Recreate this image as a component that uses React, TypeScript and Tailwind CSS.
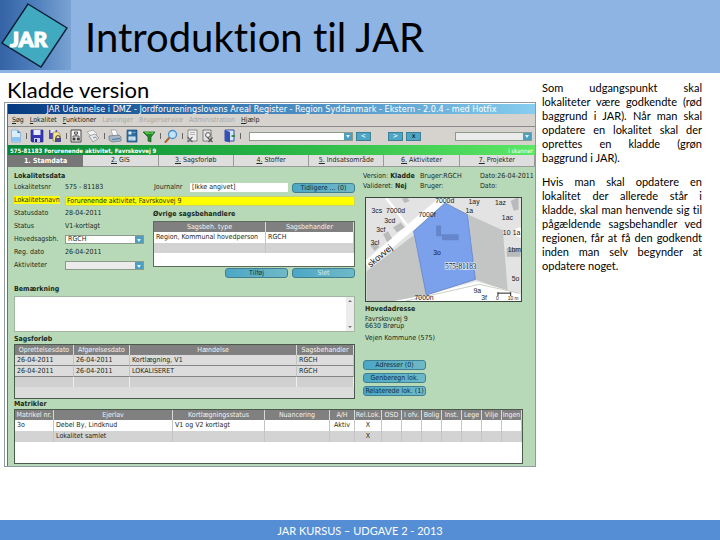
import React from 'react';

const tabs = ['1. Stamdata', '2. GIS', '3. Sagsforløb', '4. Stoffer', '5. Indsatsområde', '6. Aktiviteter', '7. Projekter'];

const menuItems = [
  { label: 'Søg', enabled: true },
  { label: 'Lokalitet', enabled: true },
  { label: 'Funktioner', enabled: true },
  { label: 'Løsninger', enabled: false },
  { label: 'Brugerservice', enabled: false },
  { label: 'Administration', enabled: false },
  { label: 'Hjælp', enabled: true },
];

const caseRows = [
  ['26-04-2011', '26-04-2011', 'Kortlægning, V1', 'RGCH'],
  ['26-04-2011', '26-04-2011', 'LOKALISERET', 'RGCH'],
];

const parcelHeads = ['Matrikel nr.', 'Ejerlav', 'Kortlægningsstatus', 'Nuancering', 'A/H', 'Rel.Lok.', 'OSD', 'I ofv.', 'Bolig', 'Inst.', 'Lege', 'Vilje', 'Ingen'];
const parcelRows = [
  ['3o', 'Debel By, Lindknud', 'V1 og V2 kortlagt', '', 'Aktiv', 'X', '', '', '', '', '', '', ''],
  ['', 'Lokalitet samlet', '', '', '', 'X', '', '', '', '', '', '', ''],
];

const Logo: React.FC = () => (
  <svg viewBox="0 0 71 70" className="h-[70px] w-[71px] shrink-0" role="img" aria-label="JAR">
    <defs>
      <linearGradient id="logoSky" x1="0" y1="0" x2="1" y2="0">
        <stop offset="0" stopColor="#3563a6" />
        <stop offset="0.5" stopColor="#4f80bd" />
        <stop offset="1" stopColor="#7aa3d3" />
      </linearGradient>
    </defs>
    <rect width="71" height="70" fill="url(#logoSky)" />
    <path d="M28 4 67 28 41 67 2 43Z" fill="#41aac0" stroke="#0d1c35" strokeWidth="1.4" />
    <text x="10" y="47" fontFamily="Lato" fontWeight="900" fontSize="21" fill="#fff" stroke="#fff" strokeWidth="1.2">JAR</text>
  </svg>
);

const Page = () => (
  <svg viewBox="0 0 12 14" className="h-[14px] w-3">
    <path d="M1.500 1h6l3 3v9h-9z" fill="#d9edfb" stroke="#7fb2dc" strokeWidth="0.8" />
    <path d="M7.500 1v3h3z" fill="#3b7fc0" />
    <path d="M2 8h8v4.600H2z" fill="#8cc4ef" />
  </svg>
);

const Disk = () => (
  <svg viewBox="0 0 14 14" className="h-[14px] w-[14px]">
    <path d="M1 1h12v12H2l-1-1z" fill="#3535b5" stroke="#24247c" strokeWidth="0.6" />
    <path d="M3.500 1h7v5h-7z" fill="#e8ecfa" />
    <path d="M4 9h6v4H4z" fill="#c9cdeb" />
    <path d="M5 10h2v3H5z" fill="#24247c" />
  </svg>
);

const DiskLock = () => (
  <svg viewBox="0 0 14 14" className="h-[14px] w-[14px]">
    <path d="M1 1h8v9H1z" fill="#4a4ac0" />
    <path d="M2.500 1h5v3h-5z" fill="#eef" />
    <path d="M5 3h5l2 2v7H5z" fill="#f5e48a" stroke="#8c7b2d" strokeWidth="0.6" />
    <path d="M7 9h6v4H7z" fill="#4c4c8d" />
    <path d="M8 9V7.500q2-2 4 0V9" fill="none" stroke="#444" />
  </svg>
);

const Preview = () => (
  <svg viewBox="0 0 12 14" className="h-[14px] w-3">
    <path d="M1 1h10v12H1z" fill="#f4f4f4" stroke="#333" strokeWidth="0.9" />
    <path d="M4.500 3h3v2h-3zM6 5v2M3 8V7h6v1" fill="none" stroke="#333" strokeWidth="0.8" />
    <path d="M2.500 8.500h3v3h-3zM6.800 8.500h3v3h-3z" fill="#444" />
  </svg>
);

const Copies = () => (
  <svg viewBox="0 0 14 14" className="h-[14px] w-[14px]">
    <path d="M1 3 7 1l4 4-5 3z" fill="#f3f3f3" stroke="#999" strokeWidth="0.7" />
    <path d="M3 7 9 5l4 4-6 4z" fill="#e5e8ea" stroke="#888" strokeWidth="0.7" />
    <path d="M7 9q2-2 4 0" fill="none" stroke="#777" strokeWidth="0.8" />
  </svg>
);

const Printer = () => (
  <svg viewBox="0 0 14 14" className="h-[14px] w-[14px]">
    <path d="M3 1h5l2 6H5z" fill="#fff" stroke="#999" strokeWidth="0.7" />
    <path d="M1 7 11 6l2 2v4l-9 1-3-2z" fill="#a9b6c2" stroke="#667482" strokeWidth="0.7" />
    <path d="M4 10.500 12 9.500" stroke="#3d78b6" strokeWidth="1.2" />
  </svg>
);

const Report = () => (
  <svg viewBox="0 0 12 14" className="h-[14px] w-3">
    <path d="M1 1h10v12H1z" fill="#2f6d9f" stroke="#1f4c78" strokeWidth="0.7" />
    <path d="M2.500 2.500h3v3h-3zM2.500 7.500h7v4h-7z" fill="#dcecf6" />
    <path d="M6.500 3.500h3M3.500 9h5M3.500 10.500h4" stroke="#8fb9d6" strokeWidth="0.7" />
  </svg>
);

const Funnel = () => (
  <svg viewBox="0 0 14 14" className="h-[14px] w-[14px]">
    <path d="M1 3h12L9 8v5l-3-1V8z" fill="#23872f" stroke="#155d1e" strokeWidth="0.7" />
    <path d="M2 2q2 1.500 4 0l2 2 4-2-1 3H4z" fill="#57bd48" />
  </svg>
);

const Magnifier = () => (
  <svg viewBox="0 0 14 14" className="h-[14px] w-[14px]">
    <path d="M5.500 8.500 1.500 13" stroke="#b0622f" strokeWidth="2" strokeLinecap="round" />
    <circle cx="8.500" cy="5.500" r="4" fill="#c5e3f8" stroke="#4a8fc7" strokeWidth="1.300" />
  </svg>
);

const CrossPage = () => (
  <svg viewBox="0 0 12 14" className="h-[14px] w-3">
    <path d="M2 1h9v11H2z" fill="#eee" stroke="#777" strokeWidth="0.8" />
    <path d="M4 3.500h5M4 5.500h5" stroke="#999" strokeWidth="0.700" />
    <path d="m1.500 8 5 5m0-5-5 5" stroke="#666" strokeWidth="1.200" />
  </svg>
);

const FindPage = () => (
  <svg viewBox="0 0 12 14" className="h-[14px] w-3">
    <path d="M1 1h8v11H1z" fill="#e5e5e5" stroke="#666" strokeWidth="0.8" />
    <circle cx="6" cy="6" r="2.400" fill="#f6f6f6" stroke="#555" />
    <path d="m5.500 8.500 5 4.500m0-4.500-4 4.500" stroke="#555" strokeWidth="1.200" />
  </svg>
);

const Door = () => (
  <svg viewBox="0 0 12 14" className="ml-[6px] h-[14px] w-3">
    <path d="M1 1h9v11H1z" fill="#d7e6fa" stroke="#2c3c9a" strokeWidth="0.9" />
    <path d="m1 1 5 2v10.500L1 12z" fill="#3450bb" />
    <path d="M7.500 7h3.500" stroke="#258a46" strokeWidth="1.800" />
  </svg>
);

const toolGroups = [
  [{ name: 'Ny', Icon: Page }],
  [{ name: 'Gem', Icon: Disk }, { name: 'Gem og lås', Icon: DiskLock }],
  [{ name: 'Vis', Icon: Preview }, { name: 'Kopier', Icon: Copies }],
  [{ name: 'Udskriv', Icon: Printer }, { name: 'Rapport', Icon: Report }, { name: 'Filter', Icon: Funnel }],
  [{ name: 'Søg', Icon: Magnifier }],
  [{ name: 'Slet', Icon: CrossPage }, { name: 'Find', Icon: FindPage }, { name: 'Luk', Icon: Door }],
];

const PanelButton: React.FC<{ children: React.ReactNode; dim?: boolean }> = ({ children, dim }) => (
  <button
    className={
      dim
        ? 'h-[10px] w-[63px] rounded-[3px] border border-[#3f7f92] bg-gradient-to-r from-[#4ba7c6] to-[#70b9c6] text-center leading-[8px] text-[#d5edf2]'
        : 'h-[10px] w-[63px] rounded-[3px] border border-[#3f7f92] bg-gradient-to-r from-[#4ba7c6] to-[#70b9c6] text-center leading-[8px] text-[#10303c]'
    }
  >
    {children}
  </button>
);

const Combo: React.FC<{ label: string; value?: string; className: string }> = ({ label, value = '', className }) => (
  <div className={`relative flex h-[9px] border border-[#8b9a8b] ${className}`}>
    <select aria-label={label} className="w-full appearance-none bg-transparent pl-[2px] leading-[7px] outline-none">
      <option>{value}</option>
    </select>
    <span className="pointer-events-none absolute inset-y-0 right-0 flex w-2 items-center justify-center bg-[#4c9fc0]">
      <svg viewBox="0 0 4 4" className="h-1 w-1">
        <path d="M0 1h4L2 4z" fill="#e4f5fb" />
      </svg>
    </span>
  </div>
);

const Row: React.FC<{ label: string; children?: React.ReactNode }> = ({ label, children }) => (
  <div className="flex h-[13px] items-center">
    <span className="w-[51px] shrink-0">{label}</span>
    {children}
  </div>
);

const Heading: React.FC<{ children: React.ReactNode }> = ({ children }) => (
  <h3 className="h-[10px] font-bold leading-[10px]">{children}</h3>
);

const th = 'overflow-hidden border-r border-[#d8d8d8] bg-[#808080] p-0 text-center font-normal text-[#f2f2f2]';
const td = 'overflow-hidden border-r border-[#c4c4c4] px-[2px] py-0';

const Map: React.FC = () => (
  <svg viewBox="0 0 157 105" className="h-[105px] w-[157px] border border-[#3c463c] bg-[#e3e3e3]" fontFamily="Liberation Sans" fontSize="7" fill="#222">
    <path d="M0 75 48 38 61 99 30 105H0zM104 17l35 16 5 62-33-12z" fill="#c3c4c4" />
    <path d="M20 0 44 31" stroke="#fff" strokeWidth="2.500" />
    <path d="M0 68 80 0" stroke="#fff" strokeWidth="8" />
    <path d="M28 105 61 99l51-14 45 13v7z" fill="#fff" />
    <path d="M40 105 115 88l40 9" fill="none" stroke="#c9cfc5" strokeWidth="1" />
    <path d="m17 37 5-3 4 7-5 4zM27 30l8-5 4 5-8 5zM4 48l5-3 4 5-5 4zM36 1l5-2 3 4-5 2zM147 3l8-4v13l-5 1zM143 51h14v9h-14z" fill="#b9babb" />
    <circle cx="156" cy="35" r="5" fill="#fff" />
    <path d="m80 5 23 12 8 66-50 16L48 34z" fill="#7ba1ec" stroke="#5578bf" strokeWidth="0.700" />
    <path d="M71 28h5v9h18v6H77v-4h-6z" fill="#6586ca" />
    <g>
      <text x="5" y="15">3cs</text>
      <text x="20" y="15">7000d</text>
      <text x="18" y="25">3cd</text>
      <text x="10" y="35">3cf</text>
      <text x="4" y="48">3cl</text>
      <text x="53" y="19">7000f</text>
      <text x="70" y="5">7000d</text>
      <text x="104" y="6">1ay</text>
      <text x="101" y="15">1a</text>
      <text x="131" y="7">1az</text>
      <text x="138" y="22">1ac</text>
      <text x="139" y="38">10</text>
      <text x="149" y="38">1a</text>
      <text x="144" y="55">1bm</text>
      <text x="148" y="85">5o</text>
      <text x="68" y="58">3o</text>
      <text x="80" y="72" fontFamily="Liberation Serif" fontSize="7.500" stroke="#dbe6fb" strokeWidth="1.500" paintOrder="stroke">575-81183</text>
      <text x="109" y="97">9a</text>
      <text x="117" y="104">3f</text>
      <text x="49" y="104">7000n</text>
      <text x="4" y="71" fontSize="9" transform="rotate(-40 4 71)">skovvej</text>
    </g>
    <path d="M134 96v4m0-3h13m0-1v4" fill="none" stroke="#222" />
    <text x="132" y="104" fontSize="5">0</text>
    <text x="144" y="104" fontSize="5">10 m</text>
  </svg>
);

const CaseForm: React.FC = () => (
  <div className="w-[341px] shrink-0">
    <Heading>Lokalitetsdata</Heading>
    <Row label="Lokalitetsnr">
      <span className="w-[89px]">575 - 81183</span>
      <label htmlFor="journal" className="w-9">Journalnr</label>
      <input id="journal" defaultValue="[Ikke angivet]" className="h-[9px] w-[98px] bg-white px-[2px] outline-none" />
      <span className="ml-auto flex">
        <PanelButton>Tidligere ... (0)</PanelButton>
      </span>
    </Row>
    <div className="flex h-[13px] items-center">
      <label htmlFor="name" className="w-[51px] shrink-0"><span className="bg-[#ffff00]">Lokalitetsnavn</span></label>
      <input id="name" defaultValue="Forurenende aktivitet, Favrskovvej 9" className="h-[10px] min-w-0 flex-1 border border-[#c9d36d] bg-[#ffff00] px-px outline-none" />
    </div>
    <div className="flex justify-between">
      <div>
        <Row label="Statusdato">28-04-2011</Row>
        <Row label="Status">V1-kortlagt</Row>
        <Row label="Hovedsagsbh.">
          <Combo label="Hovedsagsbh." value="RGCH" className="w-[79px] bg-white" />
        </Row>
        <Row label="Reg. dato">26-04-2011</Row>
        <Row label="Aktiviteter">
          <Combo label="Aktiviteter" className="w-[79px] bg-[#ebebeb]" />
        </Row>
      </div>
      <div className="w-[202px] pt-[2px]">
        <Heading>Øvrige sagsbehandlere</Heading>
        <div className="mt-[2px] h-[46px] border border-[#5d6b5d] bg-white">
          <table className="w-full table-fixed border-separate border-spacing-0">
            <colgroup>
              <col className="w-[112px]" />
              <col />
            </colgroup>
            <thead>
              <tr className="h-[10px]">
                <th className={th}>Sagsbeh. type</th>
                <th className={th}>Sagsbehandler</th>
              </tr>
            </thead>
            <tbody>
              <tr className="h-[11px] whitespace-nowrap">
                <td className={td}>Region, Kommunal hovedperson</td>
                <td className={td}>RGCH</td>
              </tr>
              <tr className="h-[10px] bg-[#d3d3d3]">
                <td className={td}></td>
                <td className={td}></td>
              </tr>
            </tbody>
          </table>
        </div>
        <div className="mt-px flex justify-end gap-1">
          <PanelButton>Tilføj</PanelButton>
          <PanelButton dim>Slet</PanelButton>
        </div>
      </div>
    </div>
    <div className="mt-[7px] h-[49px]">
      <label htmlFor="remark" className="block h-[11px] font-bold leading-[8px]">Bemærkning</label>
      <div className="flex h-9 border border-[#a3b5a3] bg-white">
        <textarea id="remark" className="min-w-0 flex-1 resize-none outline-none" />
        <div className="flex w-2 flex-col items-center justify-between bg-[#ececec] py-[2px]">
          <svg viewBox="0 0 4 4" className="h-1 w-1"><path d="M0 3h4L2 1z" fill="#777" /></svg>
          <svg viewBox="0 0 4 4" className="h-1 w-1"><path d="M0 1h4L2 3z" fill="#777" /></svg>
        </div>
      </div>
    </div>
    <Heading>Sagsforløb</Heading>
    <div className="h-[55px] border border-[#4c5a4c] bg-[#dcdcdc]">
      <table className="w-full table-fixed border-separate border-spacing-0">
        <colgroup>
          <col className="w-[59px]" />
          <col className="w-[56px]" />
          <col />
          <col className="w-[57px]" />
        </colgroup>
        <thead>
          <tr className="h-[10px]">
            {['Oprettelsesdato', 'Afgørelsesdato', 'Hændelse', 'Sagsbehandler'].map((h) => (
              <th key={h} className={th}>{h}</th>
            ))}
          </tr>
        </thead>
        <tbody>
          {caseRows.map((row) => (
            <tr key={row[2]} className="h-[11px]">
              {row.map((cell, i) => (
                <td key={i} className="border-r border-b border-r-[#c4c4c4] border-b-[#858585] px-[2px] py-0">{cell}</td>
              ))}
            </tr>
          ))}
          <tr className="h-[10px] bg-[#d0d0d0]">
            {caseRows[0].map((_, i) => (
              <td key={i} className="border-r border-[#efefef] p-0"></td>
            ))}
          </tr>
        </tbody>
      </table>
    </div>
  </div>
);

const SidePanel: React.FC = () => (
  <aside className="min-w-0 flex-1">
    <div className="grid h-5 grid-cols-[57px_60px_1fr] leading-[10px] whitespace-nowrap">
      <span>Version: <b>Kladde</b></span>
      <span>Bruger:RGCH</span>
      <span>Dato:26-04-2011</span>
      <span>Valideret: <b>Nej</b></span>
      <span>Bruger:</span>
      <span>Dato:</span>
    </div>
    <div className="mt-[6px] ml-[2px]">
      <Map />
    </div>
    <div className="mt-[2px] ml-[2px] leading-[7px]">
      <Heading>Hovedadresse</Heading>
      <p className="mt-[2px]">Favrskovvej 9</p>
      <p>6630 Brørup</p>
      <p className="mt-[5px]">Vejen Kommune (575)</p>
    </div>
    <div className="mt-[18px] flex flex-col gap-[3px]">
      <PanelButton>Adresser (0)</PanelButton>
      <PanelButton>Genberegn lok.</PanelButton>
      <PanelButton>Relaterede lok. (1)</PanelButton>
    </div>
  </aside>
);

const ParcelTable: React.FC = () => (
  <section className="mr-[6px]">
    <Heading>Matrikler</Heading>
    <div className="h-[55px] border border-[#4c5a4c] bg-white">
      <table className="w-full table-fixed border-separate border-spacing-0">
        <colgroup>
          <col className="w-[39px]" />
          <col className="w-[119px]" />
          <col className="w-[92px]" />
          <col />
          <col className="w-[25px]" />
          <col className="w-[27px]" />
          <col span={7} className="w-5" />
        </colgroup>
        <thead>
          <tr className="h-[10px] whitespace-nowrap">
            {parcelHeads.map((h) => (
              <th key={h} className={th}>{h}</th>
            ))}
          </tr>
        </thead>
        <tbody>
          {parcelRows.map((row, r) => (
            <tr key={r} className={r === 1 ? 'h-[11px] bg-[#d3d3d3]' : 'h-[11px]'}>
              {row.map((cell, i) => (
                <td key={i} className={i > 3 ? `${td} text-center` : td}>{cell}</td>
              ))}
            </tr>
          ))}
        </tbody>
      </table>
    </div>
  </section>
);

const JarWindow: React.FC = () => (
  <section className="border border-[#8f9aa0] bg-white pt-px pl-[2px] font-['DejaVu_Sans_Condensed','Liberation_Sans',sans-serif] text-[7px] leading-[9px] text-[#1b2a1b]">
    <div className="border-l border-[#6e6e6e]">
      <h2 className="h-[10px] bg-gradient-to-r from-[#063a80] via-[#4586bd] to-[#86cdef] text-center text-[9px] leading-[10px] font-normal whitespace-nowrap text-white">
        JAR Udannelse i DMZ - Jordforureningslovens Areal Register - Region Syddanmark - Ekstern - 2.0.4 - med Hotfix
      </h2>
      <nav className="flex h-3 items-center gap-[6px] bg-[#d6d3ce] pl-1">
        {menuItems.map((item) => (
          <button key={item.label} className={item.enabled ? 'first-letter:underline' : 'text-[#a9a7a3]'}>
            {item.label}
          </button>
        ))}
      </nav>
      <div className="flex h-[19px] items-center border-t border-[#8a8a8a] bg-[#d6d3ce] pr-[3px] pl-[2px]">
        <div className="flex items-center gap-[3px]">
          {toolGroups.map((group, g) => (
            <React.Fragment key={g}>
              {group.map(({ name, Icon }) => (
                <button key={name} aria-label={name} className="mr-px">
                  <Icon />
                </button>
              ))}
              <span className="h-[6px] w-px bg-[#666]" />
            </React.Fragment>
          ))}
        </div>
        <Combo label="Lokalitet" className="ml-auto w-[104px] bg-white" />
        <div className="mr-[34px] ml-[3px] flex items-center gap-[3px] text-center leading-[7px] text-white">
          <button className="mr-[14px] h-[9px] w-[15px] border border-[#3f7f92] bg-[#4ea6c6]">&lt;</button>
          <button className="h-[9px] w-[15px] border border-[#3f7f92] bg-[#4ea6c6]">&gt;</button>
          <button className="h-[9px] w-[15px] border border-[#3f7f92] bg-[#4ea6c6] text-black">x</button>
        </div>
        <Combo label="Visning" className="w-[77px] bg-[#ebebeb]" />
      </div>
      <div className="flex h-[10px] items-center justify-between bg-gradient-to-r from-[#078435] via-[#25b344] to-[#5ce765] px-[2px] text-[6px] text-white">
        <b>575-81183 Forurenende aktivitet, Favrskovvej 9</b>
        <span>i skanner</span>
      </div>
      <div className="grid h-3 grid-cols-7 bg-[#dedede] text-center">
        {tabs.map((tab, i) => (
          <button key={tab} className={i === 0 ? 'bg-[#777] font-bold text-white' : 'border-r border-b border-[#9a9a9a] first-letter:underline'}>
            {tab}
          </button>
        ))}
      </div>
      <div className="bg-[#b8d9b8] px-[6px] pt-1 pb-[2px]">
        <div className="flex gap-2">
          <CaseForm />
          <SidePanel />
        </div>
        <ParcelTable />
      </div>
    </div>
  </section>
);

const App: React.FC = () => {
  return (
    <div className="flex min-h-screen flex-col bg-white font-['Lato',sans-serif] text-black [font-variant-ligatures:none]">
      <header className="flex h-[73px] items-start bg-[#8eb4e3]">
        <Logo />
        <h1 className="pl-[14px] text-[40px] leading-[74px]">Introduktion til JAR</h1>
      </header>
      <main className="flex flex-1 items-start gap-[6px] pr-[18px] pl-1">
        <div className="min-w-0 flex-1">
          <p className="h-[29px] pl-[3px] text-[22px] leading-[34px]">Kladde version</p>
          <JarWindow />
        </div>
        <article className="w-[160px] shrink-0 pt-2 text-justify text-[11px] leading-[14px]">
          <p>
            Som udgangspunkt skal lokaliteter være godkendte (rød baggrund i JAR). Når man skal opdatere en lokalitet skal der oprettes en kladde (grøn baggrund i JAR).
          </p>
          <p className="mt-[10px]">
            Hvis man skal opdatere en lokalitet der allerede står i kladde, skal man henvende sig til pågældende sagsbehandler ved regionen, får at få den godkendt inden man selv begynder at opdatere noget.
          </p>
        </article>
      </main>
      <footer className="h-5 bg-[#558ed5] text-center text-[11px] leading-[22px] text-white">JAR KURSUS – UDGAVE 2 - 2013</footer>
    </div>
  );
};

export default App;
